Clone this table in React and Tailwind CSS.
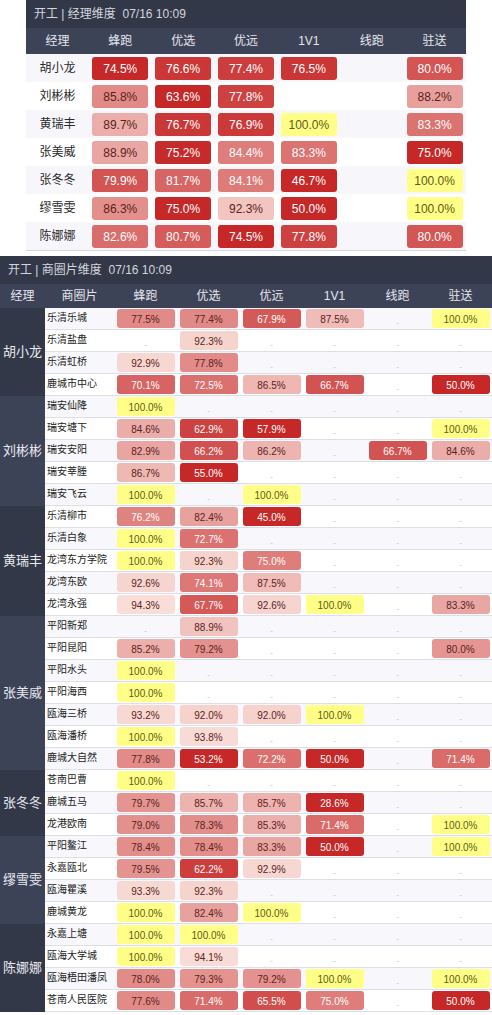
import React from 'react';

const FONT = { fontFamily: '"Liberation Sans", "Noto Sans CJK SC", sans-serif' };

const COLS = ['蜂跑', '优选', '优远', '1V1', '线跑', '驻送'];

const managerRows = [
  ['胡小龙', [74.5, 76.6, 77.4, 76.5, null, 80.0]],
  ['刘彬彬', [85.8, 63.6, 77.8, null, null, 88.2]],
  ['黄瑞丰', [89.7, 76.7, 76.9, 100, null, 83.3]],
  ['张美威', [88.9, 75.2, 84.4, 83.3, null, 75.0]],
  ['张冬冬', [79.9, 81.7, 84.1, 46.7, null, 100]],
  ['缪雪雯', [86.3, 75.0, 92.3, 50.0, null, 100]],
  ['陈娜娜', [82.6, 80.7, 74.5, 77.8, null, 80.0]],
];

const groups = [
  ['胡小龙', [
    ['乐清乐城', [77.5, 77.4, 67.9, 87.5, null, 100]],
    ['乐清盐盘', [null, 92.3, null, null, null, null]],
    ['乐清虹桥', [92.9, 77.8, null, null, null, null]],
    ['鹿城市中心', [70.1, 72.5, 86.5, 66.7, null, 50.0]],
  ]],
  ['刘彬彬', [
    ['瑞安仙降', [100, null, null, null, null, null]],
    ['瑞安塘下', [84.6, 62.9, 57.9, null, null, 100]],
    ['瑞安安阳', [82.9, 66.2, 86.2, null, 66.7, 84.6]],
    ['瑞安莘塍', [86.7, 55.0, null, null, null, null]],
    ['瑞安飞云', [100, null, 100, null, null, null]],
  ]],
  ['黄瑞丰', [
    ['乐清柳市', [76.2, 82.4, 45.0, null, null, null]],
    ['乐清白象', [100, 72.7, null, null, null, null]],
    ['龙湾东方学院', [100, 92.3, 75.0, null, null, null]],
    ['龙湾东欧', [92.6, 74.1, 87.5, null, null, null]],
    ['龙湾永强', [94.3, 67.7, 92.6, 100, null, 83.3]],
  ]],
  ['张美威', [
    ['平阳新郑', [null, 88.9, null, null, null, null]],
    ['平阳昆阳', [85.2, 79.2, null, null, null, 80.0]],
    ['平阳水头', [100, null, null, null, null, null]],
    ['平阳海西', [100, null, null, null, null, null]],
    ['瓯海三桥', [93.2, 92.0, 92.0, 100, null, null]],
    ['瓯海潘桥', [100, 93.8, null, null, null, null]],
    ['鹿城大自然', [77.8, 53.2, 72.2, 50.0, null, 71.4]],
  ]],
  ['张冬冬', [
    ['苍南巴曹', [100, null, null, null, null, null]],
    ['鹿城五马', [79.7, 85.7, 85.7, 28.6, null, null]],
    ['龙港欧南', [79.0, 78.3, 85.3, 71.4, null, 100]],
  ]],
  ['缪雪雯', [
    ['平阳鳌江', [78.4, 78.4, 83.3, 50.0, null, 100]],
    ['永嘉瓯北', [79.5, 62.2, 92.9, null, null, null]],
    ['瓯海瞿溪', [93.3, 92.3, null, null, null, null]],
    ['鹿城黄龙', [100, 82.4, 100, null, null, null]],
  ]],
  ['陈娜娜', [
    ['永嘉上塘', [100, 100, null, null, null, null]],
    ['瓯海大学城', [100, 94.1, null, null, null, null]],
    ['瓯海梧田潘凤', [78.0, 79.3, 79.2, 100, null, 100]],
    ['苍南人民医院', [77.6, 71.4, 65.5, 75.0, null, 50.0]],
  ]],
];

// red scale: low value -> dark red, high -> pale pink, 100 -> yellow
const cellColor = (v, lo, hi) => {
  if (v >= 100) return { background: '#ffff88', color: '#5e5a14' };
  const t = Math.min(1, Math.max(0, (v - lo) / (hi - lo)));
  const dark = [198, 40, 40];
  const light = [254, 240, 234];
  const c = dark.map((d, i) => Math.round(d + (light[i] - d) * t));
  return {
    background: `rgb(${c[0]},${c[1]},${c[2]})`,
    color: t >= 0.47 ? '#5c2222' : '#ffffff',
  };
};

const fmt = (v) => v.toFixed(1) + '%';

const App = () => {
  let rowIdx = 0;
  return (
    <div className="bg-white w-[492px]" style={FONT}>
      {/* 经理维度 */}
      <div className="ml-[26px] w-[440px] border-b border-[#d4d5de]">
        <div className="h-[28px] bg-[#333849] text-[#d3d6de] text-[12px] flex items-center pl-[8px]">
          开工 | 经理维度&nbsp;&nbsp;07/16 10:09
        </div>
        <div className="h-[26px] bg-[#3d4357] grid grid-cols-7 text-[12px] text-[#e4e6ec]">
          {['经理', ...COLS].map((h) => (
            <div key={h} className="flex items-center justify-center">{h}</div>
          ))}
        </div>
        {managerRows.map(([name, vals], i) => (
          <div key={name} className={`h-[28px] grid grid-cols-7 items-center ${i % 2 === 0 ? 'bg-[#f7f7fb]' : 'bg-white'}`}>
            <div className="text-center text-[12px] text-[#2a2a2a]">{name}</div>
            {vals.map((v, j) => (
              <div key={j} className="flex justify-center">
                {v !== null && (
                  <div
                    className="w-[56px] h-[23px] rounded-[3px] flex items-center justify-center pt-[2px] text-[12px]"
                    style={cellColor(v, 75, 97)}
                  >
                    {fmt(v)}
                  </div>
                )}
              </div>
            ))}
          </div>
        ))}
      </div>

      {/* 商圈片维度 */}
      <div className="mt-[5px]">
        <div className="h-[28px] bg-[#333849] text-[#d3d6de] text-[12px] flex items-center pl-[8px]">
          开工 | 商圈片维度&nbsp;&nbsp;07/16 10:09
        </div>
        <div className="h-[24px] bg-[#3d4357] grid grid-cols-[45px_69px_repeat(6,63px)] text-[12px] text-[#e4e6ec]">
          {['经理', '商圈片', ...COLS].map((h) => (
            <div key={h} className="flex items-center justify-center">{h}</div>
          ))}
        </div>
        {groups.map(([mgr, rows], g) => (
          <div key={mgr} className="flex">
            <div className={`w-[45px] shrink-0 flex items-center justify-center text-[13px] text-[#e8eaf0] ${g % 2 === 0 ? 'bg-[#333849]' : 'bg-[#3d4357]'}`}>
              {mgr}
            </div>
            <div className="flex-1">
              {rows.map(([area, vals]) => {
                const alt = rowIdx++ % 2 === 0;
                return (
                  <div
                    key={area}
                    className={`h-[22px] grid grid-cols-[69px_repeat(6,63px)] items-center border-b border-[#dedee6] ${alt ? 'bg-[#f8f8fc]' : 'bg-white'}`}
                  >
                    <div className="pl-[2px] text-[10px] text-[#222] pb-[3px] whitespace-nowrap">{area}</div>
                    {vals.map((v, j) => (
                      <div key={j} className="flex justify-center">
                        {v !== null ? (
                          <div
                            className="w-[58px] h-[19px] rounded-[3px] flex items-center justify-center pt-[1px] text-[10px]"
                            style={cellColor(v, 58, 98)}
                          >
                            {fmt(v)}
                          </div>
                        ) : (
                          <span className="text-[8px] text-[#bbbbbb] pt-[8px] leading-none">-</span>
                        )}
                      </div>
                    ))}
                  </div>
                );
              })}
            </div>
          </div>
        ))}
      </div>
    </div>
  );
};

export default App;
